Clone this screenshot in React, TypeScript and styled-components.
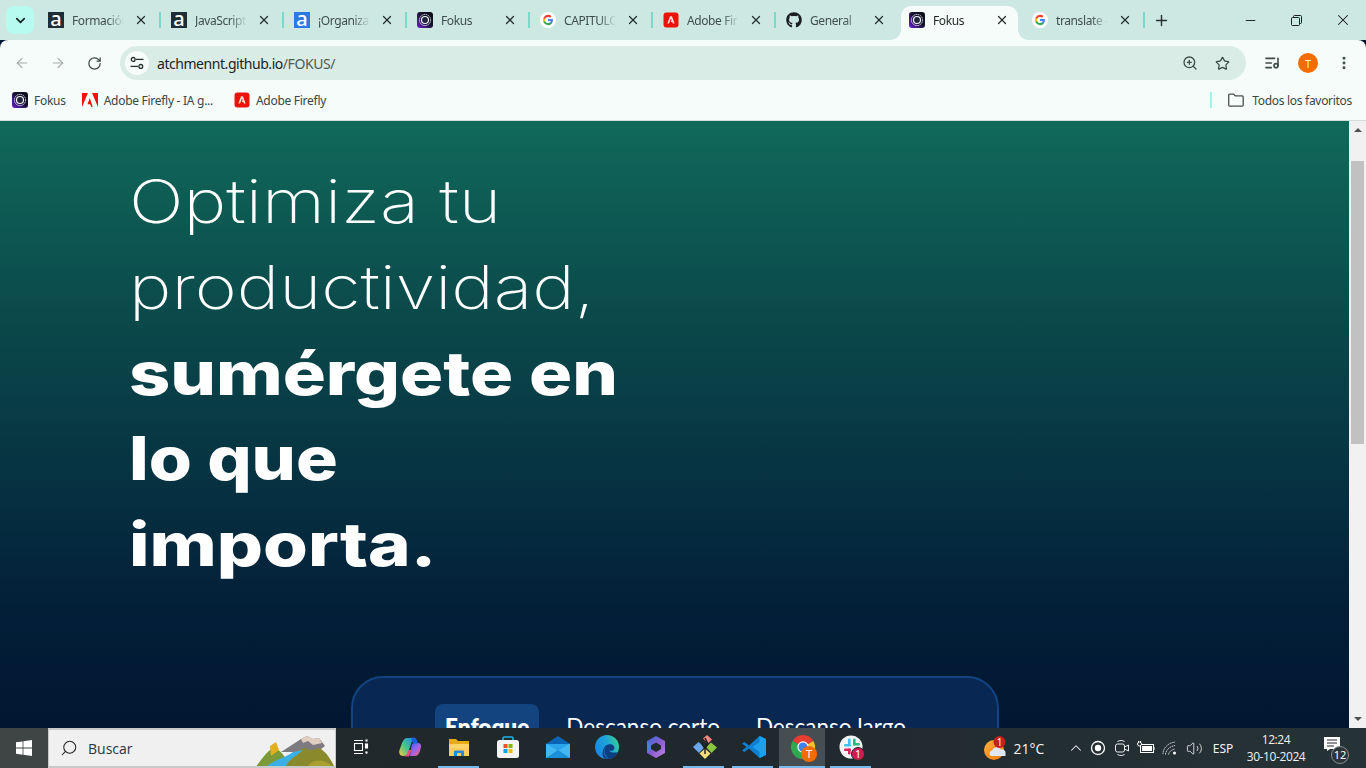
import React from "react";
import styled, { createGlobalStyle } from "styled-components";
import { ArrowLeft, ArrowRight, RotateCw, ZoomIn, Star, ListMusic, EllipsisVertical, X, Plus, ChevronDown, ChevronUp, Minus, Search, Volume2 } from "lucide-react";
import { FaGithub } from "react-icons/fa";

const Global = createGlobalStyle`
  html, body { margin: 0; padding: 0; overflow: hidden; background: #021631; }
  * { box-sizing: border-box; }
`;
const ui = `"Noto Sans", "Open Sans", sans-serif`;

const Screen = styled.div`
  width: 1366px; height: 768px; display: flex; flex-direction: column; overflow: hidden; font-family: ${ui};
`;
const TabStrip = styled.div`
  height: 40px; flex: none; background: #cde8e2; display: flex; align-items: flex-end; padding-left: 6px;
`;
const TabToggle = styled.div`
  width: 28px; height: 28px; margin: 0 3px 6px 0; border-radius: 8px; background: #b7fbf0; color: #10201c;
  display: flex; align-items: center; justify-content: center;
`;
const Tab = styled.div<{ $active?: boolean; $sep?: boolean }>`
  position: relative; width: 123px; height: 34px; flex: none; display: flex; align-items: center;
  padding: 0 0 6px 11px; color: ${(p) => (p.$active ? "#1d2624" : "#3f4f4b")};
  ${(p) => p.$sep && `
    &::after { content: ""; position: absolute; right: -1px; top: 6px; width: 2px; height: 16px; background: #7cd8cb; }
  `}
`;
const ActiveBody = styled.span`
  position: absolute; left: 3px; right: 3px; top: 0; bottom: 0; background: #f6fcf9; border-radius: 10px 10px 0 0;
  &::before, &::after {
    content: ""; position: absolute; bottom: 0; width: 10px; height: 10px;
    background: radial-gradient(circle at var(--cx) 0, #cde8e2 9.5px, #f6fcf9 10px);
  }
  &::before { left: -10px; --cx: 0; }
  &::after { right: -10px; --cx: 10px; }
`;
const TabFav = styled.span`
  width: 16px; height: 16px; flex: none; display: flex; position: relative; z-index: 1;
`;
const TabTitle = styled.span`
  width: 52px; margin: 1px 0 0 8px; font-size: 12px; line-height: 16px; white-space: nowrap; overflow: hidden; flex: none;
  letter-spacing: -0.4px; position: relative; z-index: 1;
  -webkit-mask-image: linear-gradient(90deg, #000 68%, transparent 100%);
  mask-image: linear-gradient(90deg, #000 68%, transparent 100%);
`;
const TabClose = styled.span`
  margin-left: 9px; width: 16px; height: 16px; flex: none; display: flex; align-items: center; justify-content: center; position: relative; z-index: 1;
  color: #24302d;
`;
const NewTab = styled.div`
  width: 28px; height: 28px; margin: 0 0 6px 3px; display: flex; align-items: center; justify-content: center; color: #27322f;
`;
const WindowControls = styled.div`
  margin-left: auto; display: flex; align-self: flex-start;
`;
const WinBtn = styled.div`
  width: 46.3px; height: 40px; display: flex; align-items: center; justify-content: center; color: #1b1f1e;
`;
const Toolbar = styled.div`
  height: 46px; flex: none; background: #f6fcf9; border-radius: 8px 8px 0 0; padding: 6px 4px 0; display: flex; align-items: flex-start;
`;
const ToolBtn = styled.div<{ $muted?: boolean }>`
  width: 36px; height: 34px; flex: none; display: flex; align-items: center; justify-content: center;
  color: ${(p) => (p.$muted ? "#a3adaa" : "#3c4a46")};
`;
const Omnibox = styled.div`
  margin: 0 8px; flex: none; width: 1126px; height: 34px; border-radius: 17px; background: #d9ece6;
  display: flex; align-items: center; padding: 0 8px 0 5px;
`;
const SiteChip = styled.div`
  width: 24px; height: 24px; border-radius: 50%; background: #f6fcf9; display: flex; align-items: center; justify-content: center; flex: none;
`;
const Url = styled.span`
  margin-left: 8px; font-size: 14px; color: #1b2422; letter-spacing: -0.45px;
  flex: 1; white-space: nowrap;
`;
const UrlDim = styled.span`color: #4d5b57;`;
const OmniIcon = styled.span`
  width: 32px; height: 24px; display: flex; align-items: center; justify-content: center; color: #3c4a46; flex: none;
`;
const Avatar = styled.div`
  width: 20px; height: 20px; border-radius: 50%; background: #f26c00; color: #fde9d6; font-size: 11px; display: flex; align-items: center; justify-content: center;
`;
const Bookmarks = styled.div`
  height: 35px; flex: none; background: #f6fcf9; border-bottom: 1px solid #d5dbd9; display: flex; align-items: center; padding: 0 14px 6px 12px;
`;
const Bookmark = styled.div<{ $gap: number }>`
  display: flex; align-items: center; gap: 6px; margin-right: ${(p) => p.$gap}px; font-size: 12px; color: #3a4744; letter-spacing: -0.28px; white-space: nowrap;
`;
const BookmarkRight = styled.div`
  margin-left: auto; display: flex; align-items: center; font-size: 12px; color: #3a4744; letter-spacing: -0.3px;
`;
const BarSep = styled.span`
  width: 2px; height: 16px; background: #a3f2e7; margin-right: 16px;
`;
const FolderWrap = styled.span`
  display: flex; margin-right: 8px;
`;
const Viewport = styled.div`
  flex: 1; min-height: 0; display: flex;
`;
const Page = styled.main`
  flex: 1; min-width: 0; overflow: hidden; padding-top: 38px;
  background: linear-gradient(180deg, #10695a 0, #0b4a4b 190px, #052c3f 400px, #031f38 490px, #021833 580px, #021631 100%);
`;
const Hero = styled.h1`
  margin: 0 0 0 129px; font-family: Inter, sans-serif; font-size: 60px; line-height: 85.8px; color: #fff; font-weight: 200;
`;
const Line = styled.span<{ $bold?: boolean; $stretch: number }>`
  display: block; white-space: nowrap; transform-origin: left center; transform: scaleX(${(p) => p.$stretch});
  font-weight: ${(p) => (p.$bold ? 800 : 200)};
`;
const Card = styled.section`
  width: 648px; height: 300px; margin: 88px auto 0; background: #092753; border: 2px solid #144480; border-radius: 32px;
  display: flex; justify-content: center; align-items: flex-start; padding: 26px 0 0 10px; color: #fff;
`;
const Mode = styled.button<{ $active?: boolean }>`
  appearance: none; border: 0; padding: 8px 10px; margin: 0 ${(p) => (p.$active ? 9 : 8)}px 0 ${(p) => (p.$active ? 0 : 8)}px; border-radius: 8px; color: #fff; font-family: Lato, sans-serif; font-size: 22.5px; line-height: 30px;
  white-space: nowrap; background: ${(p) => (p.$active ? "#144480" : "transparent")}; font-weight: ${(p) => (p.$active ? 800 : 400)};
`;
const Scrollbar = styled.div`
  width: 17px; flex: none; background: #f1f1f1; display: flex; flex-direction: column; align-items: center;
`;
const ArrowUp = styled.div`
  margin-top: 7px; width: 0; height: 0; border-left: 4px solid transparent; border-right: 4px solid transparent; border-bottom: 4px solid #505050;
`;
const Thumb = styled.div`
  margin-top: 29px; width: 13px; height: 283px; background: #c1c1c1;
`;
const ArrowDown = styled.div`
  margin-top: auto; margin-bottom: 7px; width: 0; height: 0; border-left: 4px solid transparent; border-right: 4px solid transparent; border-top: 4px solid #505050;
`;
const Taskbar = styled.footer`
  height: 40px; flex: none; background: linear-gradient(90deg, #23292c 0, #1f282c 50%, #263336 100%); display: flex; align-items: stretch; color: #fff;
`;
const Start = styled.div`
  width: 48px; background: #3f4445; display: flex; align-items: center; justify-content: center; flex: none;
`;
const SearchBox = styled.div`
  width: 288px; flex: none; background: #f0f0f0; border: 1px solid #c9c9c9; border-width: 2px 1px; display: flex; align-items: center; padding-left: 11px; color: #222;
  font-size: 14px; overflow: hidden; position: relative;
`;
const SearchLabel = styled.span`
  margin-left: 10px; color: #2a3540; font-family: "Open Sans", sans-serif; flex: 1;
`;
const Scene = styled.svg`
  position: absolute; right: 0; bottom: -2px;
`;
const TaskItem = styled.div<{ $open?: boolean; $active?: boolean }>`
  width: 49px; flex: none; display: flex; align-items: center; justify-content: center; position: relative; padding-bottom: 2px;
  ${(p) => p.$active && `background: #474e52; margin: 0 1px 0 2px; width: 46px;`}
  ${(p) => p.$open && `
    &::after { content: ""; position: absolute; left: 4px; right: 4px; bottom: 0; height: 2px; background: #76b9ed; }
  `}
  ${(p) => p.$active && `&::after { left: 0; right: 0; }`}
`;
const Tray = styled.div`
  margin-left: auto; display: flex; align-items: center; font-size: 12px; height: 100%;
`;
const TrayCell = styled.div<{ $w: number }>`
  width: ${(p) => p.$w}px; flex: none; display: flex; align-items: center; justify-content: center; height: 100%; color: #eef2f2; position: relative;
`;
const Temp = styled.span`font-size: 14px; font-family: "Open Sans", sans-serif; color: #f2f4f4;`;
const Clock = styled.div`
  display: flex; flex-direction: column; align-items: center; font-size: 12px; line-height: 17px; font-family: "Open Sans", sans-serif; letter-spacing: -0.4px; color: #eef2f2;
`;
const Badge12 = styled.span`
  position: absolute; left: 19px; top: 18px; width: 18px; height: 18px; border-radius: 50%; background: #2b3436; border: 1.5px solid #8a9092; font-size: 11px; line-height: 15px; text-align: center; color: #fff;
`;
const ShowDesktop = styled.div`
  width: 1px; margin: 0 4px 0 9px; background: #6a7073; flex: none;
`;
const FavA = styled.span<{ $bg: string }>`
  width: 16px; height: 16px; background: ${(p) => p.$bg}; color: #fff; display: flex; align-items: center; justify-content: center; overflow: hidden;
  font-family: "Noto Sans", sans-serif; font-size: 20px; font-weight: 500; line-height: 16px; padding-bottom: 3px;
`;
const BubbleSvg = styled.svg`
  margin-bottom: 8px; margin-right: 0;
`;

const FokusIcon = () => (
  <svg width="16" height="16" viewBox="0 0 16 16" style={{ flex: "none" }}>
    <defs><linearGradient id="fk" x1="0" x2="1" y1="1" y2="0"><stop offset="0" stopColor="#6a1fd0" /><stop offset=".55" stopColor="#15122a" /><stop offset="1" stopColor="#0b0e18" /></linearGradient></defs>
    <rect width="16" height="16" rx="3" fill="url(#fk)" />
    <circle cx="8" cy="8" r="5.6" fill="none" stroke="#cfd3e0" strokeWidth="1" strokeDasharray="1.6 .6" />
    <circle cx="8" cy="8" r="3.5" fill="#20233a" stroke="#f2f3f8" strokeWidth="1.2" />
  </svg>
);
const GoogleIcon = () => (
  <svg width="16" height="16" viewBox="0 0 24 24" style={{ flex: "none" }}>
    <circle cx="12" cy="12" r="12" fill="#fff" />
    <g transform="translate(3.6 3.6) scale(.7)">
      <path fill="#4285F4" d="M22.56 12.25c0-.78-.07-1.53-.2-2.25H12v4.26h5.92a5.06 5.06 0 0 1-2.2 3.32v2.77h3.57c2.08-1.92 3.27-4.74 3.27-8.1z" />
      <path fill="#34A853" d="M12 23c2.97 0 5.46-.98 7.28-2.66l-3.57-2.77c-.98.66-2.23 1.06-3.71 1.06-2.86 0-5.29-1.93-6.16-4.53H2.18v2.84A11 11 0 0 0 12 23z" />
      <path fill="#FBBC05" d="M5.84 14.09a6.6 6.6 0 0 1 0-4.17V7.07H2.18a11 11 0 0 0 0 9.86l3.66-2.84z" />
      <path fill="#EA4335" d="M12 5.38c1.62 0 3.06.56 4.21 1.64l3.15-3.15C17.45 2.09 14.97 1 12 1A11 11 0 0 0 2.18 7.07l3.66 2.84C6.71 7.31 9.14 5.38 12 5.38z" />
    </g>
  </svg>
);
const AdobeSquare = () => (
  <svg width="16" height="16" viewBox="0 0 16 16" style={{ flex: "none" }}>
    <rect x=".5" y=".5" width="15" height="15" rx="3" fill="#ec1109" />
    <path d="M7 4.200h2l2.600 7.300H9.800l-.5-1.500H7.700l.9-2-.6-1.500-2 5H4.400z" fill="#ffdcd6" />
  </svg>
);
const AdobeLogo = () => (
  <svg width="16" height="16" viewBox="0 0 24 24" style={{ flex: "none" }}>
    <path fill="#f40f02" d="M13.966 22.624l-1.69-4.281H8.122l3.708-9.3 4.096 13.581zM8.884 1.376H0v21.248zm6.232 0H24v21.248z" />
  </svg>
);
const TuneIcon = () => (
  <svg width="14" height="14" viewBox="0 0 14 14" fill="none" stroke="#26322f" strokeWidth="1.3">
    <circle cx="3.2" cy="3.4" r="1.9" /><path d="M6 3.4h7.5" />
    <circle cx="10.8" cy="10.4" r="1.9" /><path d="M.5 10.4H8" />
  </svg>
);
const Restore = () => (
  <svg width="11" height="11" viewBox="0 0 11 11" fill="none" stroke="#1b1f1e" strokeWidth="1">
    <rect x=".5" y="2.5" width="8" height="8" rx="1" /><path d="M2.5 2.5V1.5a1 1 0 0 1 1-1h6a1 1 0 0 1 1 1v6a1 1 0 0 1-1 1h-1" />
  </svg>
);
const Folder = () => (
  <svg width="16" height="14" viewBox="0 0 16 14" fill="none" stroke="#47514f" strokeWidth="1.3">
    <path d="M.7 2.2a1 1 0 0 1 1-1h4l1.600 1.700h6.900a1 1 0 0 1 1 1v8.200a1 1 0 0 1-1 1H1.700a1 1 0 0 1-1-1z" />
  </svg>
);
const WinLogo = () => (
  <svg width="16" height="16" viewBox="0 0 16 16" fill="#fff">
    <path d="M0 2.300 6.600 1.400v6.200H0zM7.400 1.300 16 0v7.600H7.400zM0 8.400h6.600v6.300L0 13.700zM7.400 8.400H16V16l-8.600-1.200z" />
  </svg>
);
const TaskView = () => (
  <svg width="16" height="16" viewBox="0 0 16 16" fill="none" stroke="#fff" strokeWidth="1.1">
    <path d="M1 1.500h9M1 14.500h9" /><rect x="1.500" y="4.500" width="8" height="7" /><rect x="13" y="1" width="1" height="1" /><rect x="12.500" y="5" width="2" height="4" fill="#fff" /><rect x="13" y="13" width="1" height="1" />
  </svg>
);
const Copilot = () => (
  <svg width="24" height="24" viewBox="0 0 24 24">
    <defs>
      <linearGradient id="cp1" x1="0" y1="1" x2="1" y2="0"><stop offset="0" stopColor="#f5c542" /><stop offset=".5" stopColor="#3fc68b" /><stop offset="1" stopColor="#1f8fe8" /></linearGradient>
      <linearGradient id="cp2" x1="0" y1="0" x2="1" y2="1"><stop offset="0" stopColor="#2c6bea" /><stop offset=".6" stopColor="#b260e0" /><stop offset="1" stopColor="#f0683c" /></linearGradient>
    </defs>
    <path d="M9 3h6l-5 15c-.5 2-2 3-4 3H5c-3 0-4.500-3-3.500-6L4 8c1-3 3-5 5-5z" fill="url(#cp1)" />
    <path d="M12 21h-1 6c2.500 0 4-2 5-5l1-4c.5-2.500-1-4-3-4h-3c-2 0-3 1-3.500 3z" fill="url(#cp2)" />
    <path d="M13 2.500h2.500c2 0 3 1 3.500 3l1 3h-5z" fill="#1a60dc" />
    <path d="M11 21.500H8c-1 0-2-.5-2-.5 1.500 0 3-1 3.500-3l1-3h3z" fill="#e84a8a" />
  </svg>
);
const Explorer = () => (
  <svg width="24" height="24" viewBox="0 0 24 24">
    <path d="M2 4h7l2 2h11v15H2z" fill="#e8a91c" />
    <path d="M2 9h20v12H2z" fill="#fbd667" />
    <path d="M2 13 22 13v8H2z" fill="#f6cf5e" />
    <path d="M7 21v-4.500a1 1 0 0 1 1-1h8a1 1 0 0 1 1 1V21h-3v-3h-4v3z" fill="#2b88d8" />
  </svg>
);
const Store = () => (
  <svg width="24" height="24" viewBox="0 0 24 24">
    <path d="M7 6V3.500A1.500 1.500 0 0 1 8.500 2h7A1.500 1.500 0 0 1 17 3.500V6" fill="none" stroke="#1cb3e8" strokeWidth="1.600" />
    <rect x="1" y="5" width="22" height="18" rx="2.500" fill="#f4f4f4" />
    <rect x="7.500" y="9" width="4" height="4" fill="#f25022" /><rect x="12.500" y="9" width="4" height="4" fill="#7fba00" />
    <rect x="7.500" y="14" width="4" height="4" fill="#00a4ef" /><rect x="12.500" y="14" width="4" height="4" fill="#ffb900" />
  </svg>
);
const Mail = () => (
  <svg width="24" height="24" viewBox="0 0 24 24" style={{ marginLeft: 2 }}>
    <path d="M0 9 12 1l12 8v1L12 17 0 10z" fill="#0c64b8" />
    <path d="M0 9h24v14H0z" fill="#2aa4ea" />
    <path d="M0 8.500 12 16 24 8.500V23L0 23z" fill="#44b8f2" />
    <path d="M0 23 12 15 24 23z" fill="#1b8fd8" />
  </svg>
);
const Edge = () => (
  <svg width="24" height="24" viewBox="0 0 24 24" style={{ marginLeft: 2 }}>
    <defs>
      <linearGradient id="ed2" x1="0" x2="1" y1="0.600" y2="0.200"><stop offset="0" stopColor="#1a86dc" /><stop offset=".55" stopColor="#1ca6d8" /><stop offset="1" stopColor="#3cd08c" /></linearGradient>
    </defs>
    <circle cx="12" cy="12" r="12" fill="url(#ed2)" />
    <path d="M9 13c1-3 5-4.500 8-3.500 2 1 3 3 2 5-1 1.500-3 1.500-5 1 2 2.500 6 2.500 8.800 1.500C21 21.500 17 24 13 24c-2 0-3.500-.5-3.500-.5C6.500 21 7.500 15.500 9 13z" fill="#0d3f80" />
    <path d="M12.500 11.500c-2.500 1-3.500 4-2.500 7 .8 2 2 4 3.500 5.500-2.500-1-4.500-4-4.500-8 0-2 1.500-4 3.500-4.500z" fill="#1a7cd6" />
  </svg>
);
const M365 = () => (
  <svg width="24" height="24" viewBox="0 0 24 24" style={{ marginLeft: 2 }}>
    <defs><linearGradient id="m3" x1="0" x2="1" y1="0" y2="1"><stop offset="0" stopColor="#2f6fd8" /><stop offset=".5" stopColor="#8a5cd0" /><stop offset="1" stopColor="#c184e0" /></linearGradient></defs>
    <path d="M12 1 21 6v12l-9 5-9-5V6z" fill="url(#m3)" />
    <path d="M12 7.500l5 3v3.500l-5 3-5-3v-3.500z" fill="#20292c" />
    <path d="M3 6l4 3.500v5L3 18z" fill="#4a7fe0" />
  </svg>
);
const GitIcon = () => (
  <svg width="24" height="24" viewBox="0 0 24 24" style={{ marginLeft: 2 }}>
    <path d="M10 3.500 14 0l5 4.500-4 4z" fill="#f08a80" />
    <path d="M0 12l5.500-5 6 5-5.500 6z" fill="#6ea6ee" />
    <path d="M13 12l5-4.500 6 5-5.500 5.500z" fill="#8cc63f" />
    <path d="M6.500 18.500l5.500-5 5.500 5-5.500 5.500z" fill="#f4de7a" />
    <path d="M12 3l3 6-3 4.500V19M12 13.500 9 9" stroke="#1a1a1a" strokeWidth="1.400" fill="none" />
  </svg>
);
const VSCode = () => (
  <svg width="24" height="24" viewBox="0 0 24 24" style={{ marginLeft: 2 }}>
    <path d="M17.500 1 24 4v16l-6.500 3L7 13.500 2.500 17 0 15.500l4.500-3.500L0 8.500 2.500 7 7 10.500z" fill="#0f7fcf" />
    <path d="M17.500 1 24 4v16l-6.500 3zM17.500 7 10.500 12l7 5z" fill="#1ea0ef" fillRule="evenodd" />
  </svg>
);
const Chrome = () => (
  <svg width="46" height="32" viewBox="-12 -4 46 32">
    <path d="M1.600 6A12 12 0 0 1 22.400 6L12 12z" fill="#e53e30" />
    <path d="M22.400 6A12 12 0 0 1 12 24L12 12z" fill="#fbc02d" />
    <path d="M12 24A12 12 0 0 1 1.600 6L12 12z" fill="#30a84f" />
    <circle cx="12" cy="12" r="5.700" fill="#fff" />
    <circle cx="12" cy="12" r="4.500" fill="#3b82f0" />
    <circle cx="18" cy="19" r="8" fill="#f26c00" />
    <text x="18" y="23" fontSize="11" fill="#fff" textAnchor="middle" fontFamily="Noto Sans, sans-serif">T</text>
  </svg>
);
const Slack = () => (
  <svg width="32" height="32" viewBox="-4 -3 32 32">
    <circle cx="12" cy="13" r="11.500" fill="#f4f4f4" />
    <rect x="5" y="10" width="7" height="2.600" rx="1.300" fill="#36c5f0" />
    <rect x="9" y="4.500" width="2.600" height="6" rx="1.300" fill="#36c5f0" />
    <rect x="14" y="4.500" width="2.600" height="7" rx="1.300" fill="#2eb67d" />
    <rect x="14" y="9" width="7" height="2.600" rx="1.300" fill="#2eb67d" />
    <rect x="5" y="14.500" width="7" height="2.600" rx="1.300" fill="#e01e5a" />
    <rect x="9" y="14.500" width="2.600" height="6" rx="1.300" fill="#e01e5a" />
    <circle cx="19" cy="20" r="6.500" fill="#cf1c54" stroke="#20292c" strokeWidth="1" />
    <text x="19" y="24" fontSize="10.500" fill="#fff" textAnchor="middle" fontFamily="Noto Sans, sans-serif">1</text>
  </svg>
);
const Weather = () => (
  <svg width="24" height="26" viewBox="0 0 24 26">
    <defs><linearGradient id="wt" x1="0" x2="1" y1="0" y2="1"><stop offset="0" stopColor="#fbb040" /><stop offset="1" stopColor="#f2780c" /></linearGradient></defs>
    <circle cx="11" cy="15" r="10" fill="url(#wt)" />
    <path d="M8 21a3 3 0 0 1 1-5.500 5 5 0 0 1 9-1 3.500 3.500 0 0 1 4.500 4V21z" fill="#dfe8f2" />
    <circle cx="16.500" cy="7" r="6" fill="#c4201c" />
    <text x="16.500" y="10.500" fontSize="10" fill="#fff" textAnchor="middle" fontFamily="Noto Sans, sans-serif">1</text>
  </svg>
);
const RecordIco = () => (
  <svg width="16" height="16" viewBox="0 0 16 16" fill="none"><circle cx="8" cy="8" r="6.500" stroke="#fff" strokeWidth="1.300" /><circle cx="8" cy="8" r="3.200" fill="#fff" /></svg>
);
const CamIco = () => (
  <svg width="16" height="18" viewBox="0 0 16 18" fill="none" stroke="#e8ecec" strokeWidth="1">
    <rect x="1.500" y="5" width="9" height="8" rx="2" /><path d="m10.500 8 4-2v6l-4-2M3.500 2.500c2-1.300 5-1.300 7 0M3.500 15.500c2 1.300 5 1.300 7 0" />
  </svg>
);
const BattIco = () => (
  <svg width="18" height="14" viewBox="0 0 18 14" fill="none" stroke="#fff" strokeWidth="1">
    <rect x="3.500" y="3.500" width="13" height="8" /><rect x="5" y="5" width="10" height="5" fill="#fff" stroke="none" /><path d="M17 6v3" />
    <circle cx="2.500" cy="3" r="2" fill="#20292c" /><path d="M1.500 0v1.500M3.500 0v1.500" />
  </svg>
);
const WifiIco = () => (
  <svg width="16" height="16" viewBox="0 0 16 16" fill="none" stroke="#c8cdcd" strokeWidth="1">
    <path d="M1 14C1 8 6 3 13 2M3.500 14.500C4 10 7.500 6.500 13 5.500M6.500 14.500c.5-2.500 3-5 6.500-5.500" strokeDasharray="1.500 .6" />
    <circle cx="12.500" cy="13" r="1.500" fill="#fff" stroke="none" />
  </svg>
);
const Bubble = () => (
  <BubbleSvg width="16" height="14" viewBox="0 0 16 14"><path d="M0 0h16v12H6l-3 2v-2H0z" fill="#fff" /><path d="M3 3h10M3 6h10M3 9h7" stroke="#20292c" strokeWidth="1" /></BubbleSvg>
);

const tabs: { title: string; fav: React.ReactNode; sep?: boolean; active?: boolean }[] = [
  { title: "Formación", fav: <FavA $bg="#1f2d36">a</FavA>, sep: true },
  { title: "JavaScript", fav: <FavA $bg="#1f2d36">a</FavA>, sep: true },
  { title: "¡Organiza", fav: <FavA $bg="#2a7ae2">a</FavA>, sep: true },
  { title: "Fokus", fav: <FokusIcon />, sep: true },
  { title: "CAPITULO", fav: <GoogleIcon />, sep: true },
  { title: "Adobe Fir", fav: <AdobeSquare />, sep: true },
  { title: "General", fav: <FaGithub size={16} color="#1b1f23" /> },
  { title: "Fokus", fav: <FokusIcon />, active: true },
  { title: "translate -", fav: <GoogleIcon />, sep: true },
];

const heroLines = [
  { text: "Optimiza tu", stretch: 1.207 },
  { text: "productividad,", stretch: 1.195 },
  { text: "sumérgete en", stretch: 1.199, bold: true },
  { text: "lo que", stretch: 1.162, bold: true },
  { text: "importa.", stretch: 1.209, bold: true },
];

export default function App() {
  return (
    <Screen>
      <Global />
      <TabStrip>
        <TabToggle><ChevronDown size={15} strokeWidth={2.6} /></TabToggle>
        {tabs.map((t, i) => (
          <Tab key={i} $active={t.active} $sep={t.sep}>
            {t.active && <ActiveBody />}
            <TabFav>{t.fav}</TabFav>
            <TabTitle>{t.title}</TabTitle>
            <TabClose><X size={14} strokeWidth={2.2} /></TabClose>
          </Tab>
        ))}
        <NewTab><Plus size={17} strokeWidth={2} /></NewTab>
        <WindowControls>
          <WinBtn><Minus size={15} strokeWidth={1.5} /></WinBtn>
          <WinBtn><Restore /></WinBtn>
          <WinBtn><X size={18} strokeWidth={1.4} /></WinBtn>
        </WindowControls>
      </TabStrip>
      <Toolbar>
        <ToolBtn $muted><ArrowLeft size={16} strokeWidth={1.8} /></ToolBtn>
        <ToolBtn $muted><ArrowRight size={16} strokeWidth={1.8} /></ToolBtn>
        <ToolBtn><RotateCw size={15} strokeWidth={2} /></ToolBtn>
        <Omnibox>
          <SiteChip><TuneIcon /></SiteChip>
          <Url>atchmennt.github.io<UrlDim>/FOKUS/</UrlDim></Url>
          <OmniIcon><ZoomIn size={16} strokeWidth={1.9} /></OmniIcon>
          <OmniIcon><Star size={15} strokeWidth={2} /></OmniIcon>
        </Omnibox>
        <ToolBtn><ListMusic size={16} strokeWidth={2.4} /></ToolBtn>
        <ToolBtn><Avatar>T</Avatar></ToolBtn>
        <ToolBtn><EllipsisVertical size={16} strokeWidth={2.4} /></ToolBtn>
      </Toolbar>
      <Bookmarks>
        <Bookmark $gap={16}><FokusIcon />Fokus</Bookmark>
        <Bookmark $gap={21}><AdobeLogo />Adobe Firefly - IA g...</Bookmark>
        <Bookmark $gap={0}><AdobeSquare />Adobe Firefly</Bookmark>
        <BookmarkRight>
          <BarSep />
          <FolderWrap><Folder /></FolderWrap>
          Todos los favoritos
        </BookmarkRight>
      </Bookmarks>
      <Viewport>
        <Page>
          <Hero>
            {heroLines.map((l) => (
              <Line key={l.text} $bold={l.bold} $stretch={l.stretch}>{l.text}</Line>
            ))}
          </Hero>
          <Card>
            <Mode $active>Enfoque</Mode>
            <Mode>Descanso corto</Mode>
            <Mode>Descanso largo</Mode>
          </Card>
        </Page>
        <Scrollbar>
          <ArrowUp />
          <Thumb />
          <ArrowDown />
        </Scrollbar>
      </Viewport>
      <Taskbar>
        <Start><WinLogo /></Start>
        <SearchBox>
          <Search size={18} strokeWidth={1.4} style={{ transform: "scaleX(-1)" }} />
          <SearchLabel>Buscar</SearchLabel>
          <Scene width="80" height="36" viewBox="0 0 80 36">
            <path d="M26 20 46 7l6-3 6 3 6-1 6 8-8 6z" fill="#7d7a80" />
            <path d="M46 7l6-3 6 3 6-1 3 5-9 2-5-4-5 2z" fill="#e0cfc0" />
            <path d="M0 36c6-8 10-14 15-18 5-3 10 0 14 6l8 12z" fill="#7d9a3a" />
            <path d="M15 14l6-4 3 8-8 6z" fill="#e0b020" />
            <path d="M30 36c4-10 8-16 20-20 4 3 10 2 14 0 8 4 12 12 16 20z" fill="#8a8a2c" />
            <path d="M10 36c8-8 20-10 28-16l10-2c-6 6-14 8-18 18z" fill="#3bb0e8" />
            <path d="M52 36c4-8 14-12 28 0z" fill="#a8a030" />
          </Scene>
        </SearchBox>
        <TaskItem><TaskView /></TaskItem>
        <TaskItem><Copilot /></TaskItem>
        <TaskItem $open><Explorer /></TaskItem>
        <TaskItem><Store /></TaskItem>
        <TaskItem><Mail /></TaskItem>
        <TaskItem><Edge /></TaskItem>
        <TaskItem><M365 /></TaskItem>
        <TaskItem $open><GitIcon /></TaskItem>
        <TaskItem $open><VSCode /></TaskItem>
        <TaskItem $open $active><Chrome /></TaskItem>
        <TaskItem $open><Slack /></TaskItem>
        <Tray>
          <TrayCell $w={24}><Weather /></TrayCell>
          <TrayCell $w={44}><Temp>21°C</Temp></TrayCell>
          <TrayCell $w={14} />
          <TrayCell $w={21}><ChevronUp size={18} strokeWidth={1.4} /></TrayCell>
          <TrayCell $w={24}><RecordIco /></TrayCell>
          <TrayCell $w={24}><CamIco /></TrayCell>
          <TrayCell $w={24}><BattIco /></TrayCell>
          <TrayCell $w={24}><WifiIco /></TrayCell>
          <TrayCell $w={24}><Volume2 size={17} strokeWidth={1.2} /></TrayCell>
          <TrayCell $w={34}>ESP</TrayCell>
          <TrayCell $w={72}><Clock><span>12:24</span><span>30-10-2024</span></Clock></TrayCell>
          <TrayCell $w={40}><Bubble /><Badge12>12</Badge12></TrayCell>
          <ShowDesktop />
        </Tray>
      </Taskbar>
    </Screen>
  );
}
